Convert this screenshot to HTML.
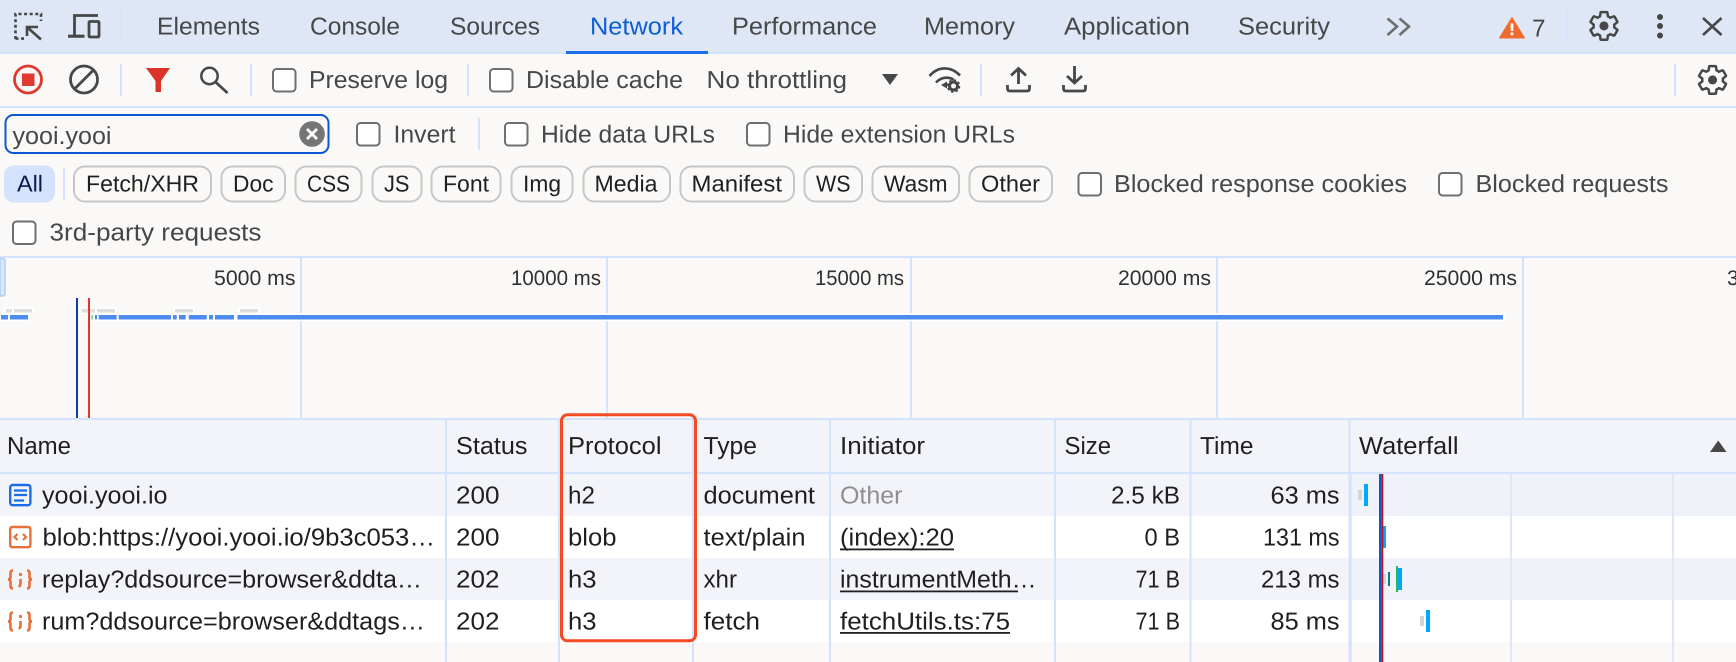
<!DOCTYPE html>
<html><head><meta charset="utf-8"><title>Network</title>
<style>
html,body{margin:0;padding:0;background:#faf9f7;width:1736px;height:662px;overflow:hidden}
svg{display:block}
text{font-family:"Liberation Sans",sans-serif;font-size:24.5px;white-space:pre}
.l text,text.l{fill:#474747}
.d text,text.d{fill:#1f1f1f}
.c text{font-size:23px;fill:#1f1f1f}
.o text{font-size:21px;fill:#303030}
.cb{fill:#fff;stroke:#6f6f6f;stroke-width:2}
.chip{fill:none;stroke:#c7c7c7;stroke-width:2}
</style></head><body>
<svg width="1736" height="662" viewBox="0 0 1736 662" xmlns="http://www.w3.org/2000/svg" text-rendering="geometricPrecision">
<!-- tab bar -->
<rect x="0" y="0" width="1736" height="53" fill="#dfe7f6"/>
<rect x="0" y="52" width="1736" height="2" fill="#d3e3fd"/>
<rect x="566" y="51" width="142" height="3" fill="#1b6ee8"/>
<rect x="120" y="10" width="2" height="32" fill="#d3e3fd"/>
<rect x="1566" y="10" width="2" height="32" fill="#d3e3fd"/>
<!-- inspect icon -->
<g fill="none" stroke="#474747" stroke-width="2.6">
<path d="M15.5 39V14H41V21" stroke-dasharray="3 2.6"/>
<path d="M15.5 38.6H24" stroke-dasharray="3 2.6"/>
<path d="M27 36V27H38M27.5 27.5L41 39.5"/>
</g>
<!-- device icon -->
<g fill="none" stroke="#474747" stroke-width="2.8">
<path d="M74.5 35V15.5H98"/>
<path d="M68 36.2H84.5" stroke-width="3.2"/>
<rect x="89" y="21.5" width="10" height="15.5" rx="1"/>
</g>
<g class="l">
<text x="157" y="34.5" textLength="103" lengthAdjust="spacingAndGlyphs">Elements</text>
<text x="310" y="34.5" textLength="90" lengthAdjust="spacingAndGlyphs">Console</text>
<text x="450" y="34.5" textLength="90" lengthAdjust="spacingAndGlyphs">Sources</text>
<text x="590" y="34.5" textLength="93" lengthAdjust="spacingAndGlyphs" style="fill:#0b5ed7">Network</text>
<text x="732" y="34.5" textLength="145" lengthAdjust="spacingAndGlyphs">Performance</text>
<text x="924" y="34.5" textLength="91" lengthAdjust="spacingAndGlyphs">Memory</text>
<text x="1064" y="34.5" textLength="126" lengthAdjust="spacingAndGlyphs">Application</text>
<text x="1238" y="34.5" textLength="92" lengthAdjust="spacingAndGlyphs">Security</text>
<text x="1532" y="36.5" textLength="13.5" lengthAdjust="spacingAndGlyphs">7</text>
</g>
<path d="M1387.5 18.5L1397 26.5L1387.5 35M1399.5 18.5L1409 26.5L1399.5 35" fill="none" stroke="#6e6e6e" stroke-width="2.6"/>
<path d="M1512 17.5L1524.5 38H1499.5Z" fill="#ef6c2e" stroke="#ef6c2e" stroke-width="1" stroke-linejoin="round"/>
<rect x="1510.7" y="23.5" width="2.6" height="7.5" fill="#fff"/><rect x="1510.7" y="32.5" width="2.6" height="2.8" fill="#fff"/>
<!-- gear -->
<g transform="translate(1587.4,9.4) scale(1.38)">
<path d="M19.43 12.98c.04-.32.07-.64.07-.98 0-.34-.03-.66-.07-.98l2.11-1.65c.19-.15.24-.42.12-.64l-2-3.46c-.09-.16-.26-.25-.44-.25-.06 0-.12.01-.17.03l-2.49 1c-.52-.4-1.08-.73-1.69-.98l-.38-2.65C14.46 2.18 14.25 2 14 2h-4c-.25 0-.46.18-.49.42l-.38 2.65c-.61.25-1.17.59-1.69.98l-2.49-1c-.06-.02-.12-.03-.18-.03-.17 0-.34.09-.43.25l-2 3.46c-.13.22-.07.49.12.64l2.11 1.65c-.04.32-.07.65-.07.98 0 .33.03.66.07.98l-2.11 1.65c-.19.15-.24.42-.12.64l2 3.46c.09.16.26.25.44.25.06 0 .12-.01.17-.03l2.49-1c.52.4 1.08.73 1.69.98l.38 2.65c.03.24.24.42.49.42h4c.25 0 .46-.18.49-.42l.38-2.65c.61-.25 1.17-.59 1.69-.98l2.49 1c.06.02.12.03.18.03.17 0 .34-.09.43-.25l2-3.46c.12-.22.07-.49-.12-.64l-2.11-1.65z" fill="none" stroke="#474747" stroke-width="1.8"/>
<circle cx="12" cy="12" r="3.3" fill="#474747"/>
</g>
<circle cx="1660" cy="17" r="3" fill="#474747"/><circle cx="1660" cy="26" r="3" fill="#474747"/><circle cx="1660" cy="35.5" r="3" fill="#474747"/>
<path d="M1703 18L1721.5 35M1721.5 18L1703 35" stroke="#474747" stroke-width="2.6" fill="none"/>

<!-- toolbar -->
<rect x="0" y="106" width="1736" height="2" fill="#d3e3fd"/>
<circle cx="28" cy="79.5" r="13.5" fill="none" stroke="#e03a30" stroke-width="2.8"/>
<rect x="22" y="73.5" width="12.5" height="12.5" fill="#e03a30"/>
<circle cx="84" cy="79.5" r="13.5" fill="none" stroke="#474747" stroke-width="2.8"/>
<path d="M74.5 89L93.5 70" stroke="#474747" stroke-width="2.8"/>
<rect x="120" y="64" width="2" height="32" fill="#d3e3fd"/>
<path d="M146 68H170L161 81V92H155.5V81Z" fill="#dc3328"/>
<circle cx="209.5" cy="76" r="8.2" fill="none" stroke="#474747" stroke-width="2.5"/>
<path d="M215.5 82L227.5 93" stroke="#474747" stroke-width="2.8"/>
<rect x="250" y="64" width="2" height="32" fill="#d3e3fd"/>
<rect class="cb" x="273" y="69" width="22.5" height="22.5" rx="3.5"/>
<rect x="467" y="64" width="2" height="32" fill="#d3e3fd"/>
<rect class="cb" x="490" y="69" width="22.5" height="22.5" rx="3.5"/>
<g class="l">
<text x="309" y="88" textLength="139" lengthAdjust="spacingAndGlyphs">Preserve log</text>
<text x="526" y="88" textLength="157" lengthAdjust="spacingAndGlyphs">Disable cache</text>
<text x="706.5" y="88" textLength="140.5" lengthAdjust="spacingAndGlyphs">No throttling</text>
</g>
<path d="M882 74H898L890 85Z" fill="#474747"/>
<g fill="none" stroke="#474747" stroke-width="2.6">
<path d="M929.5 76C938 66 951 66 960 75.5"/>
<path d="M936 82.5C941 77 948 76.5 953.5 79.5"/>
</g>
<path d="M941 85L947 81.5V88.5Z" fill="#474747"/>
<circle cx="953.5" cy="86" r="4" fill="none" stroke="#474747" stroke-width="3"/>
<circle cx="953.5" cy="86" r="6" fill="none" stroke="#474747" stroke-width="1.6" stroke-dasharray="2.5 2.2"/>
<rect x="980" y="64" width="2" height="32" fill="#d3e3fd"/>
<g fill="none" stroke="#474747" stroke-width="2.8">
<path d="M1007.5 85V88.5Q1007.5 91 1010 91H1027Q1029.5 91 1029.5 88.5V85"/>
<path d="M1018.5 84V68.5M1011 75.5L1018.5 68.5L1026 75.5"/>
<path d="M1063.5 85V88.5Q1063.5 91 1066 91H1083Q1085.5 91 1085.5 88.5V85"/>
<path d="M1074.5 66V83M1067 76L1074.5 83L1082 76"/>
</g>
<rect x="1674" y="64" width="2" height="32" fill="#d3e3fd"/>
<g transform="translate(1696,63.4) scale(1.38)">
<path d="M19.43 12.98c.04-.32.07-.64.07-.98 0-.34-.03-.66-.07-.98l2.11-1.65c.19-.15.24-.42.12-.64l-2-3.46c-.09-.16-.26-.25-.44-.25-.06 0-.12.01-.17.03l-2.49 1c-.52-.4-1.08-.73-1.69-.98l-.38-2.65C14.46 2.18 14.25 2 14 2h-4c-.25 0-.46.18-.49.42l-.38 2.65c-.61.25-1.17.59-1.69.98l-2.49-1c-.06-.02-.12-.03-.18-.03-.17 0-.34.09-.43.25l-2 3.46c-.13.22-.07.49.12.64l2.11 1.65c-.04.32-.07.65-.07.98 0 .33.03.66.07.98l-2.11 1.65c-.19.15-.24.42-.12.64l2 3.46c.09.16.26.25.44.25.06 0 .12-.01.17-.03l2.49-1c.52.4 1.08.73 1.69.98l.38 2.65c.03.24.24.42.49.42h4c.25 0 .46-.18.49-.42l.38-2.65c.61-.25 1.17-.59 1.69-.98l2.49 1c.06.02.12.03.18.03.17 0 .34-.09.43-.25l2-3.46c.12-.22.07-.49-.12-.64l-2.11-1.65z" fill="none" stroke="#474747" stroke-width="1.8"/>
<circle cx="12" cy="12" r="3.3" fill="#474747"/>
</g>

<!-- filter row -->
<rect x="5.5" y="115" width="323" height="38" rx="8" fill="#faf9f7" stroke="#0b57d0" stroke-width="2"/>
<text class="l" x="12.5" y="144" textLength="99" lengthAdjust="spacingAndGlyphs">yooi.yooi</text>
<circle cx="312" cy="134" r="12.8" fill="#757575"/>
<path d="M307 129L317 139M317 129L307 139" stroke="#fff" stroke-width="2.8"/>
<rect class="cb" x="357" y="123" width="22.5" height="22.5" rx="3.5"/>
<rect x="478" y="118" width="2" height="32" fill="#d3e3fd"/>
<rect class="cb" x="505" y="123" width="22.5" height="22.5" rx="3.5"/>
<rect class="cb" x="747" y="123" width="22.5" height="22.5" rx="3.5"/>
<g class="l">
<text x="393.5" y="142.5" textLength="62" lengthAdjust="spacingAndGlyphs">Invert</text>
<text x="541" y="142.5" textLength="174" lengthAdjust="spacingAndGlyphs">Hide data URLs</text>
<text x="783" y="142.5" textLength="232" lengthAdjust="spacingAndGlyphs">Hide extension URLs</text>
</g>

<!-- chips -->
<rect x="4" y="165.5" width="51" height="37" rx="10" fill="#d3e3fd"/>
<rect x="63" y="168" width="2" height="32" fill="#d3e3fd"/>
<rect class="chip" x="74" y="166.5" width="137" height="35" rx="11"/>
<rect class="chip" x="221.5" y="166.5" width="63.5" height="35" rx="11"/>
<rect class="chip" x="295.5" y="166.5" width="66" height="35" rx="11"/>
<rect class="chip" x="372.5" y="166.5" width="49" height="35" rx="11"/>
<rect class="chip" x="431.5" y="166.5" width="69" height="35" rx="11"/>
<rect class="chip" x="511.5" y="166.5" width="61" height="35" rx="11"/>
<rect class="chip" x="583.5" y="166.5" width="86.5" height="35" rx="11"/>
<rect class="chip" x="680.5" y="166.5" width="113.5" height="35" rx="11"/>
<rect class="chip" x="804.5" y="166.5" width="57.5" height="35" rx="11"/>
<rect class="chip" x="872.5" y="166.5" width="86.5" height="35" rx="11"/>
<rect class="chip" x="969.5" y="166.5" width="82.5" height="35" rx="11"/>
<g class="c">
<text x="17" y="191.5" textLength="26" lengthAdjust="spacingAndGlyphs" style="fill:#041e49">All</text>
<text x="86" y="191.5" textLength="113" lengthAdjust="spacingAndGlyphs">Fetch/XHR</text>
<text x="233" y="191.5" textLength="40.5" lengthAdjust="spacingAndGlyphs">Doc</text>
<text x="307" y="191.5" textLength="43" lengthAdjust="spacingAndGlyphs">CSS</text>
<text x="384" y="191.5" textLength="25.5" lengthAdjust="spacingAndGlyphs">JS</text>
<text x="443" y="191.5" textLength="46" lengthAdjust="spacingAndGlyphs">Font</text>
<text x="523" y="191.5" textLength="38" lengthAdjust="spacingAndGlyphs">Img</text>
<text x="594.5" y="191.5" textLength="63" lengthAdjust="spacingAndGlyphs">Media</text>
<text x="691.5" y="191.5" textLength="90.5" lengthAdjust="spacingAndGlyphs">Manifest</text>
<text x="816" y="191.5" textLength="34.5" lengthAdjust="spacingAndGlyphs">WS</text>
<text x="884" y="191.5" textLength="63.5" lengthAdjust="spacingAndGlyphs">Wasm</text>
<text x="981" y="191.5" textLength="59" lengthAdjust="spacingAndGlyphs">Other</text>
</g>
<rect class="cb" x="1078.5" y="173" width="22.5" height="22.5" rx="3.5"/>
<rect class="cb" x="1439" y="173" width="22.5" height="22.5" rx="3.5"/>
<rect class="cb" x="13" y="221.5" width="22.5" height="22.5" rx="3.5"/>
<g class="l">
<text x="1114" y="192" textLength="293" lengthAdjust="spacingAndGlyphs">Blocked response cookies</text>
<text x="1475.5" y="192" textLength="193" lengthAdjust="spacingAndGlyphs">Blocked requests</text>
<text x="49.5" y="240.5" textLength="212" lengthAdjust="spacingAndGlyphs">3rd-party requests</text>
</g>

<!-- overview -->
<rect x="0" y="256" width="1736" height="2" fill="#d3e3fd"/>
<path d="M0 258.5H2Q5 258.5 5 261.5V293Q5 296 2 296H0Z" fill="#dbe6fa" stroke="#b4cdf6" stroke-width="1.5"/>
<g fill="#d3e3fd">
<rect x="300" y="258" width="2" height="160"/>
<rect x="606" y="258" width="2" height="160"/>
<rect x="910" y="258" width="2" height="160"/>
<rect x="1216" y="258" width="2" height="160"/>
<rect x="1522" y="258" width="2" height="160"/>
</g>
<g class="o">
<text x="214" y="285" textLength="81.5" lengthAdjust="spacingAndGlyphs">5000 ms</text>
<text x="511" y="285" textLength="90" lengthAdjust="spacingAndGlyphs">10000 ms</text>
<text x="815" y="285" textLength="89" lengthAdjust="spacingAndGlyphs">15000 ms</text>
<text x="1118" y="285" textLength="93" lengthAdjust="spacingAndGlyphs">20000 ms</text>
<text x="1424" y="285" textLength="93" lengthAdjust="spacingAndGlyphs">25000 ms</text>
<text x="1727" y="285">3</text>
</g>
<!-- overview bars -->
<g fill="#fff">
<rect x="0" y="313" width="30" height="8"/><rect x="4" y="307.5" width="30" height="6"/>
<rect x="90" y="313" width="1415" height="8"/><rect x="79" y="307.5" width="38" height="6"/><rect x="173" y="307.5" width="22" height="6"/><rect x="238" y="307.5" width="22" height="6"/>
</g>
<g fill="#dedfdc">
<rect x="6" y="309" width="6" height="3.6"/><rect x="14" y="309" width="18" height="3.6"/>
<rect x="81.5" y="309" width="13.5" height="3.6"/><rect x="97" y="309" width="18" height="3.6"/>
<rect x="175" y="309" width="18" height="3.6"/><rect x="240" y="309" width="18" height="3.6"/>
</g>
<g fill="#4d8bf0">
<rect x="1" y="315" width="7" height="4.5"/><rect x="10" y="315" width="18" height="4.5"/>
<rect x="95" y="315" width="2" height="4.5"/><rect x="98.7" y="315" width="18" height="4.5"/>
<rect x="118.7" y="315" width="52.3" height="4.5"/><rect x="173" y="315" width="3.7" height="4.5"/>
<rect x="179" y="315" width="6.7" height="4.5"/><rect x="188.7" y="315" width="18" height="4.5"/>
<rect x="209" y="315" width="4" height="4.5"/><rect x="215" y="315" width="19" height="4.5"/>
<rect x="237.5" y="315" width="1265.5" height="4.5"/>
</g>
<rect x="91.5" y="315" width="1.2" height="4.5" fill="#4ccb5f"/>
<rect x="76" y="298" width="2" height="120" fill="#0a3ea8"/>
<rect x="88" y="298" width="2" height="120" fill="#e5342d"/>

<!-- table -->
<rect x="0" y="418" width="1736" height="2" fill="#d3e3fd"/>
<rect x="0" y="420" width="1736" height="52" fill="#f2f4f9"/>
<rect x="0" y="472" width="1736" height="2" fill="#d3e3fd"/>
<rect x="0" y="474" width="1736" height="42" fill="#f2f4f9"/>
<rect x="0" y="516" width="1736" height="42" fill="#fff"/>
<rect x="0" y="558" width="1736" height="42" fill="#f2f4f9"/>
<rect x="0" y="600" width="1736" height="42" fill="#fff"/>
<!-- waterfall shaded rows -->
<rect x="1350" y="474" width="386" height="42" fill="#eff2f8"/>
<rect x="1350" y="558" width="386" height="42" fill="#eff2f8"/>
<g fill="#d3e3fd">
<rect x="445" y="420" width="2" height="242"/>
<rect x="558" y="420" width="2" height="242"/>
<rect x="692" y="420" width="2" height="242"/>
<rect x="829" y="420" width="2" height="242"/>
<rect x="1054" y="420" width="2" height="242"/>
<rect x="1189.5" y="420" width="2" height="242"/>
<rect x="1348.5" y="420" width="2" height="242"/>
</g>
<rect x="1350.5" y="474" width="1.5" height="188" fill="#dde7f7"/>
<rect x="1510" y="474" width="2" height="188" fill="#dde7f5"/>
<rect x="1672" y="474" width="2" height="188" fill="#dde7f5"/>
<g class="d">
<text x="7" y="454" textLength="64" lengthAdjust="spacingAndGlyphs">Name</text>
<text x="456" y="454" textLength="71.5" lengthAdjust="spacingAndGlyphs">Status</text>
<text x="568" y="454" textLength="93.5" lengthAdjust="spacingAndGlyphs">Protocol</text>
<text x="703.5" y="454" textLength="53.5" lengthAdjust="spacingAndGlyphs">Type</text>
<text x="840" y="454" textLength="85" lengthAdjust="spacingAndGlyphs">Initiator</text>
<text x="1064.5" y="454" textLength="46.5" lengthAdjust="spacingAndGlyphs">Size</text>
<text x="1200" y="454" textLength="53.5" lengthAdjust="spacingAndGlyphs">Time</text>
<text x="1359" y="454" textLength="99.5" lengthAdjust="spacingAndGlyphs">Waterfall</text>
</g>
<path d="M1718.2 440.5L1726.5 452H1710Z" fill="#474747"/>

<!-- icons -->
<rect x="10.2" y="485" width="20.2" height="20.2" rx="2.5" fill="none" stroke="#1a6fe8" stroke-width="2.4"/>
<path d="M14 490.5H27M14 495H27M14 500.5H24" stroke="#1a6fe8" stroke-width="2.2" fill="none"/>
<rect x="10.2" y="527" width="20.2" height="20.2" rx="2" fill="none" stroke="#e8703a" stroke-width="2.4"/>
<path d="M17.5 534L14.5 537L17.5 540M23 534L26 537L23 540" fill="none" stroke="#e8703a" stroke-width="2.2"/>
<g fill="none" stroke="#e8703a" stroke-width="2.6">
<path d="M13 570.5Q10.500 570.500 10.500 573V577Q10.500 579.500 8 579.500Q10.500 579.500 10.500 582V586Q10.500 588.500 13 588.500"/>
<path d="M27 570.5Q29.500 570.500 29.500 573V577Q29.500 579.500 32 579.500Q29.500 579.500 29.500 582V586Q29.500 588.500 27 588.500"/>
<path d="M20.5 579V584Q20.5 586 18.5 586.5"/>
<path d="M13 612.5Q10.500 612.500 10.500 615V619Q10.500 621.500 8 621.500Q10.500 621.500 10.500 624V628Q10.500 630.500 13 630.500"/>
<path d="M27 612.5Q29.500 612.500 29.500 615V619Q29.500 621.500 32 621.500Q29.500 621.500 29.500 624V628Q29.500 630.500 27 630.500"/>
<path d="M20.5 621V626Q20.5 628 18.5 628.5"/>
</g>
<circle cx="20.5" cy="574.5" r="1.6" fill="#e8703a"/><circle cx="20.5" cy="616.5" r="1.6" fill="#e8703a"/>

<!-- rows -->
<g class="d">
<text x="42" y="503.5" textLength="125.5" lengthAdjust="spacingAndGlyphs">yooi.yooi.io</text>
<text x="42.5" y="545.5" textLength="392.5" lengthAdjust="spacingAndGlyphs">blob:https://yooi.yooi.io/9b3c053…</text>
<text x="42" y="587.5" textLength="380" lengthAdjust="spacingAndGlyphs">replay?ddsource=browser&amp;ddta…</text>
<text x="42" y="629.5" textLength="383" lengthAdjust="spacingAndGlyphs">rum?ddsource=browser&amp;ddtags…</text>
<text x="456" y="503.5" textLength="43.5" lengthAdjust="spacingAndGlyphs">200</text>
<text x="456" y="545.5" textLength="43.5" lengthAdjust="spacingAndGlyphs">200</text>
<text x="456" y="587.5" textLength="43.5" lengthAdjust="spacingAndGlyphs">202</text>
<text x="456" y="629.5" textLength="43.5" lengthAdjust="spacingAndGlyphs">202</text>
<text x="568" y="503.5" textLength="27" lengthAdjust="spacingAndGlyphs">h2</text>
<text x="568" y="545.5" textLength="48.5" lengthAdjust="spacingAndGlyphs">blob</text>
<text x="568" y="587.5" textLength="28.5" lengthAdjust="spacingAndGlyphs">h3</text>
<text x="568" y="629.5" textLength="28.5" lengthAdjust="spacingAndGlyphs">h3</text>
<text x="703.5" y="503.5" textLength="111.5" lengthAdjust="spacingAndGlyphs">document</text>
<text x="703.5" y="545.5" textLength="102" lengthAdjust="spacingAndGlyphs">text/plain</text>
<text x="703.5" y="587.5" textLength="33.5" lengthAdjust="spacingAndGlyphs">xhr</text>
<text x="703.5" y="629.5" textLength="56.5" lengthAdjust="spacingAndGlyphs">fetch</text>
<text x="840" y="503.5" textLength="62.5" lengthAdjust="spacingAndGlyphs" style="fill:#8f8f8f">Other</text>
<text x="840" y="545.5" textLength="114" lengthAdjust="spacingAndGlyphs">(index):20</text>
<text x="840" y="587.5" textLength="196.5" lengthAdjust="spacingAndGlyphs">instrumentMeth…</text>
<text x="840" y="629.5" textLength="170" lengthAdjust="spacingAndGlyphs">fetchUtils.ts:75</text>
<text x="1111" y="503.5" textLength="69" lengthAdjust="spacingAndGlyphs">2.5 kB</text>
<text x="1144.5" y="545.5" textLength="35.5" lengthAdjust="spacingAndGlyphs">0 B</text>
<text x="1135.5" y="587.5" textLength="44.5" lengthAdjust="spacingAndGlyphs">71 B</text>
<text x="1135.5" y="629.5" textLength="44.5" lengthAdjust="spacingAndGlyphs">71 B</text>
<text x="1270.5" y="503.5" textLength="69" lengthAdjust="spacingAndGlyphs">63 ms</text>
<text x="1263" y="545.5" textLength="76.5" lengthAdjust="spacingAndGlyphs">131 ms</text>
<text x="1261" y="587.5" textLength="78.5" lengthAdjust="spacingAndGlyphs">213 ms</text>
<text x="1270.5" y="629.5" textLength="69" lengthAdjust="spacingAndGlyphs">85 ms</text>
</g>
<g fill="#1f1f1f">
<rect x="840" y="548.5" width="114" height="1.8"/>
<rect x="840" y="590.5" width="178" height="1.8"/>
<rect x="840" y="632" width="170" height="1.8"/>
</g>

<!-- waterfall -->
<rect x="1358" y="490" width="4" height="10" fill="#d4d4d4"/>
<rect x="1364" y="484" width="4" height="22" fill="#00a8f8"/>
<rect x="1383" y="526" width="3" height="22" fill="#00a8f8"/>
<rect x="1383" y="574" width="3" height="10" fill="#d4d4d4"/>
<rect x="1388" y="572" width="2" height="14" fill="#0a7a8f"/>
<rect x="1396" y="566" width="2" height="26" fill="#2db852"/>
<rect x="1398" y="568" width="4" height="22" fill="#00a8f8"/>
<rect x="1420" y="616" width="4" height="10" fill="#d4d4d4"/>
<rect x="1426" y="610" width="4" height="22" fill="#00a8f8"/>
<rect x="1379" y="474" width="2.3" height="188" fill="#0b57d0"/>
<rect x="1381.3" y="474" width="2" height="188" fill="#c5111b"/>

<!-- highlight -->
<rect x="561.5" y="414.8" width="134" height="226" rx="6" fill="none" stroke="#f44b25" stroke-width="3"/>
</svg>
</body></html>
